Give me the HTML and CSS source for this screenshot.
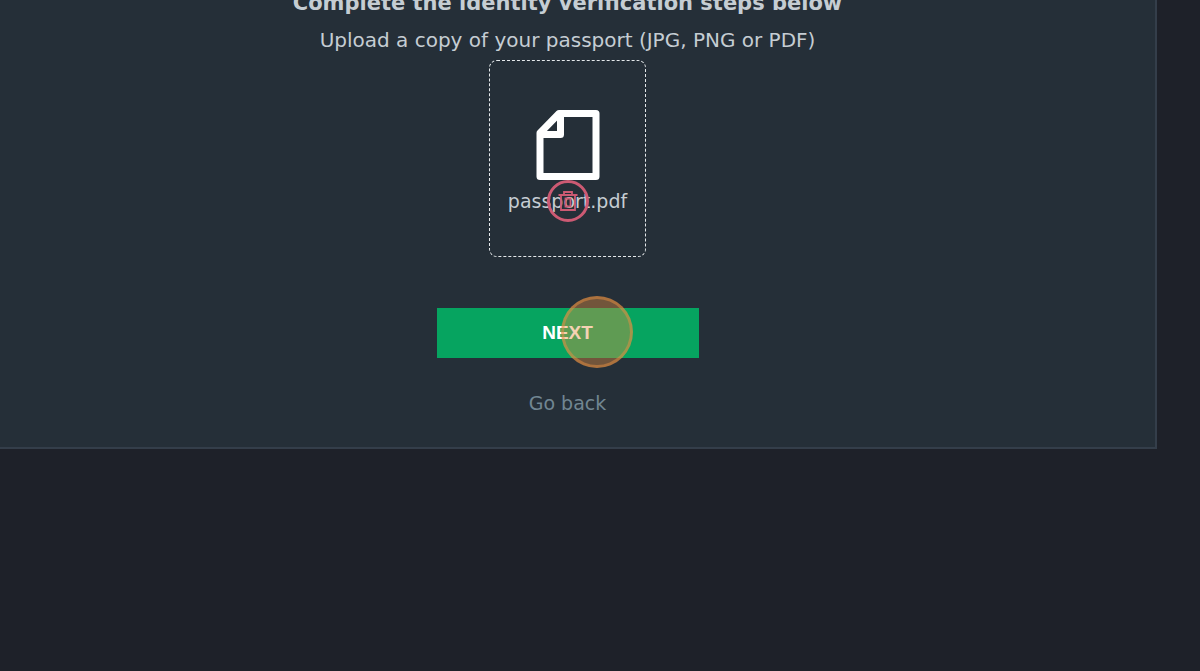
FILE: index.html
```html
<!DOCTYPE html>
<html lang="en">
<head>
<meta charset="utf-8">
<meta name="viewport" content="width=device-width, initial-scale=1">
<title>Identity verification</title>
<link rel="stylesheet" href="styles.css">
</head>
<body>
<main class="card">
  <h1 class="title">Complete the identity verification steps below</h1>
  <p class="hint">Upload a copy of your passport (JPG, PNG or PDF)</p>
  <section class="upload" aria-label="Uploaded file">
    <svg class="file-icon" viewBox="0 0 64 70" aria-hidden="true">
      <path d="M23 3.5H60V66.500H4V23Z M24.500 4V24.500H4" fill="none" stroke="#fff" stroke-width="7" stroke-linejoin="round"/>
    </svg>
    <div class="file-row">
      <span class="file-name">passport.pdf</span>
      <button class="remove" type="button" aria-label="Remove passport.pdf">
        <svg class="trash-icon" viewBox="0 0 20 20" aria-hidden="true">
          <path d="M0.500 4H19.500 M6 3V1H14V3 M3 4V19H17V4 M7.500 7.500V15.500H12.500V7.500Z" fill="none" stroke="currentColor" stroke-width="1.800"/>
        </svg>
      </button>
    </div>
  </section>
  <div class="next-wrap">
    <button class="next" type="button">NEXT</button>
    <span class="click-marker" aria-hidden="true"></span>
  </div>
  <a class="back" href="#">Go back</a>
</main>
</body>
</html>
```
FILE: styles.css
```css
* {
  box-sizing: border-box;
}

body {
  margin: 0;
  overflow: hidden;
  background: #1e2129;
  color: #c5cdd3;
  font-family: "DejaVu Sans", sans-serif;
  font-size: 19px;
  line-height: 24px;
}

.card {
  display: flex;
  flex-direction: column;
  align-items: center;
  margin: -13px 43px 0 -22px;
  padding-bottom: 32px;
  background: #252f38;
  border: 2px solid #343e4a;
  border-top: 0;
}

.title {
  margin: 0;
  font-size: 21px;
  line-height: 32px;
}

.hint {
  margin: 9px 0 8px;
  font-size: 20px;
}

.upload {
  display: flex;
  flex-direction: column;
  align-items: center;
  gap: 9px;
  padding: 49px 18px 43px;
  border: 1px dashed #e4e8ea;
  border-radius: 8px;
}

.file-icon {
  width: 64px;
  height: 70px;
}

.file-row {
  position: relative;
}

.remove {
  position: absolute;
  top: 50%;
  left: 50%;
  display: grid;
  place-items: center;
  width: 42px;
  height: 42px;
  padding: 0;
  transform: translate(-50%, -50%);
  background: transparent;
  border: 3px solid #cc5a73;
  border-radius: 50%;
  color: #cc5a73;
}

.trash-icon {
  width: 20px;
  height: 20px;
}

.next-wrap {
  position: relative;
  width: 262px;
  margin: 51px 0 33px;
}

.next {
  display: block;
  width: 100%;
  height: 50px;
  padding: 0;
  background: #06a460;
  border: 0;
  color: #fff;
  font: bold 19px "Liberation Sans", Arial, sans-serif;
}

.click-marker {
  position: absolute;
  top: -12px;
  right: 66px;
  width: 72px;
  height: 72px;
  background: rgba(229, 143, 65, 0.4);
  border: 3px solid rgba(229, 143, 65, 0.5);
  border-radius: 50%;
  pointer-events: none;
}

.back {
  color: #718692;
  text-decoration: none;
}
```
